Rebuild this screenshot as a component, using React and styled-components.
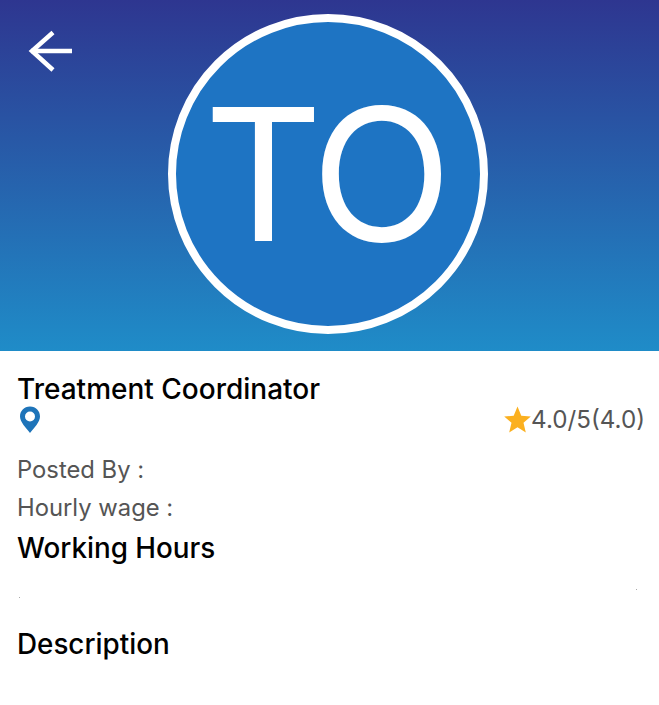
import React from 'react';
import styled, { createGlobalStyle } from 'styled-components';

const GlobalStyle = createGlobalStyle`
  html, body {
    margin: 0;
    padding: 0;
    background: #fff;
    font-family: Inter, "Noto Sans", sans-serif;
  }
`

const Page = styled.div`
  width: 659px;
  height: 705px;
  overflow: hidden;
  background: #fff;
`

const Header = styled.header`
  position: relative;
  height: 351px;
  display: flex;
  justify-content: center;
  padding: 14px 3px 0 0;
  box-sizing: border-box;
  background: linear-gradient(180deg, #2e3690 0%, #1f8cc8 100%);
`

const BackButton = styled.button`
  position: absolute;
  left: 28px;
  top: 29px;
  width: 46px;
  height: 46px;
  padding: 0;
  border: none;
  background: none;
  cursor: pointer;
`

const Avatar = styled.div`
  width: 320px;
  height: 320px;
  box-sizing: border-box;
  border: 8px solid #fff;
  border-radius: 50%;
  background: #1e74c3;
  color: #fff;
  display: flex;
  align-items: center;
  justify-content: center;
  padding-right: 6px;
  font-size: 184px;
  font-weight: 400;
  letter-spacing: -6px;
  line-height: 1;
`

const Content = styled.main`
  padding: 22px 14px 0 17px;
`

const Title = styled.h2`
  margin: 0;
  font-size: 28px;
  line-height: 32px;
  font-weight: 550;
  color: #000;
`

const MetaRow = styled.div`
  display: flex;
  justify-content: space-between;
  align-items: flex-start;
  height: 46px;
`

const PinIcon = styled.svg`
  margin-left: 1px;
`

const Rating = styled.div`
  display: flex;
  align-items: center;
  font-size: 24.200px;
  color: #555;
`

const Label = styled.div`
  font-size: 23.800px;
  line-height: 38px;
  color: #555;
`

const Dots = styled.div`
  display: flex;
  justify-content: space-between;
  height: 64px;
  padding: 0 8px 0 2px;
`

const Dot = styled.i`
  display: block;
  width: 1px;
  height: 1px;
  margin-top: ${p => p.$top}px;
  background: #aaa;
`

const Section = styled.h3`
  margin: ${p => p.$gap || 0}px 0 0;
  font-size: 27.800px;
  line-height: 32px;
  font-weight: 550;
  color: #000;
`

export default function App() {
  return <>
    <GlobalStyle />
    <Page>
      <Header>
        <BackButton aria-label="back">
          <svg width="46" height="46" viewBox="0 0 46 46" fill="none" stroke="#fff" strokeWidth="4.500">
            <path d="M3 22H44" />
            <path d="M25 3.500L4 22L25 41" />
          </svg>
        </BackButton>
        <Avatar>TO</Avatar>
      </Header>
      <Content>
        <Title>Treatment Coordinator</Title>
        <MetaRow>
          <PinIcon width="24" height="28" viewBox="0 0 24 28">
            <path fillRule="evenodd" fill="#1e74b9" d="M12 1.500C6 1.500 2 6 2 11.500C2 17 8 23 12 28C16 23 22 17 22 11.500C22 6 18 1.500 12 1.500ZM12 6.500A5 5 0 1 1 12 16.500A5 5 0 1 1 12 6.500Z" />
          </PinIcon>
          <Rating>
            <svg width="27" height="27" viewBox="0 0 27 27">
              <path fill="#fbb01f" d="M13.500 0.500L17.300 9.800L26.800 10.500L19.500 16.800L21.800 26.500L13.500 21.300L5.200 26.500L7.500 16.800L0.200 10.500L9.700 9.800Z" />
            </svg>
            4.0/5(4.0)
          </Rating>
        </MetaRow>
        <Label>Posted By :</Label>
        <Label>Hourly wage :</Label>
        <Section $gap={5}>Working Hours</Section>
        <Dots>
          <Dot $top={33} />
          <Dot $top={25} />
        </Dots>
        <Section>Description</Section>
      </Content>
    </Page>
  </>;
}
